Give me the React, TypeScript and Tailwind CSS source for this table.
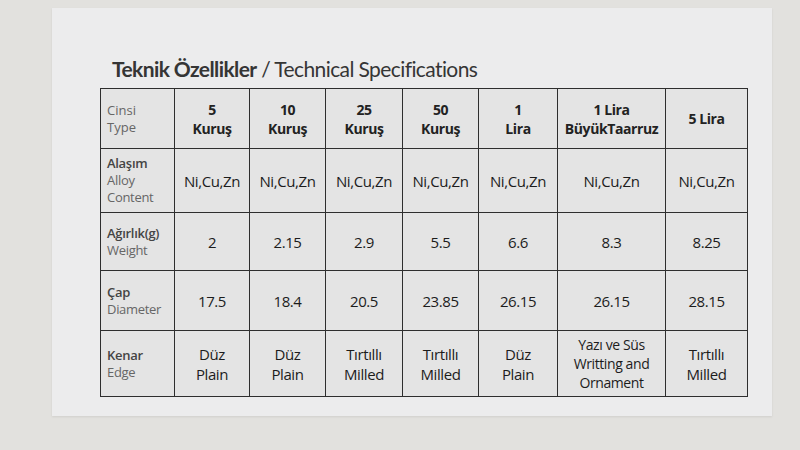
import React from 'react';

const heads = [
  ['5', 'Kuruş'],
  ['10', 'Kuruş'],
  ['25', 'Kuruş'],
  ['50', 'Kuruş'],
  ['1', 'Lira'],
  ['1 Lira', 'BüyükTaarruz'],
  ['5 Lira'],
];

const widths = ['w-[74px]', 'w-[75px]', 'w-[76px]', 'w-[77px]', 'w-[76px]', 'w-[79px]', 'w-[108px]', 'w-[82px]'];

const rows: { tr: string; en: string[]; h: string; cells: string[][] }[] = [
  {
    tr: 'Alaşım',
    en: ['Alloy', 'Content'],
    h: 'h-[64px]',
    cells: Array(7).fill(['Ni,Cu,Zn']),
  },
  {
    tr: 'Ağırlık(g)',
    en: ['Weight'],
    h: 'h-[58px]',
    cells: [['2'], ['2.15'], ['2.9'], ['5.5'], ['6.6'], ['8.3'], ['8.25']],
  },
  {
    tr: 'Çap',
    en: ['Diameter'],
    h: 'h-[60px]',
    cells: [['17.5'], ['18.4'], ['20.5'], ['23.85'], ['26.15'], ['26.15'], ['28.15']],
  },
  {
    tr: 'Kenar',
    en: ['Edge'],
    h: 'h-[66px]',
    cells: [
      ['Düz', 'Plain'],
      ['Düz', 'Plain'],
      ['Tırtıllı', 'Milled'],
      ['Tırtıllı', 'Milled'],
      ['Düz', 'Plain'],
      ['Yazı ve Süs', 'Writting and', 'Ornament'],
      ['Tırtıllı', 'Milled'],
    ],
  },
];

const cell = 'border-[1.5px] border-[#2e2e2e] align-middle';

export default function App() {
  return (
    <div className="w-[800px] h-[450px] bg-[#e2e1de] overflow-hidden pt-[8px] font-['Open_Sans',sans-serif]">
      <div className="ml-[52px] w-[720px] h-[408px] bg-[#ececed] pt-[46px] pl-[48px] shadow-[0_1px_2px_rgba(0,0,0,0.08)]">
        <h1 className="ml-[12px] text-[21px] leading-[30px] tracking-[-0.6px] text-[#353535] font-['Lato',sans-serif]">
          <span className="font-bold">Teknik Özellikler</span> / Technical Specifications
        </h1>
        <table className="mt-[4px] border-collapse bg-[#e4e4e4] text-[#1c1c1c] table-fixed">
          <thead>
            <tr className="h-[60px]">
              <th className={`${cell} ${widths[0]} text-left pl-[6px] font-normal text-[13px] leading-[17px] text-[#666]`}>
                <div>Cinsi</div>
                <div>Type</div>
              </th>
              {heads.map((h, i) => (
                <th key={i} className={`${cell} ${widths[i + 1]} text-center font-bold text-[14px] leading-[19px] tracking-[-0.4px] text-[#222]`}>
                  {h.map((l, j) => (
                    <div key={j}>{l}</div>
                  ))}
                </th>
              ))}
            </tr>
          </thead>
          <tbody>
            {rows.map((r, i) => (
              <tr key={i} className={r.h}>
                <td className={`${cell} text-left pl-[6px] text-[13px] leading-[17px] tracking-[-0.3px]`}>
                  <div className="font-semibold text-[#444]">{r.tr}</div>
                  {r.en.map((e, j) => (
                    <div key={j} className="text-[#666]">{e}</div>
                  ))}
                </td>
                {r.cells.map((c, j) => (
                  <td key={j} className={`${cell} text-center text-[15px] leading-[20px] tracking-[-0.4px]`}>
                    {c.map((l, k) => (
                      <div key={k} className={c.length === 3 ? 'text-[14px] leading-[19px]' : ''}>{l}</div>
                    ))}
                  </td>
                ))}
              </tr>
            ))}
          </tbody>
        </table>
      </div>
    </div>
  );
}
